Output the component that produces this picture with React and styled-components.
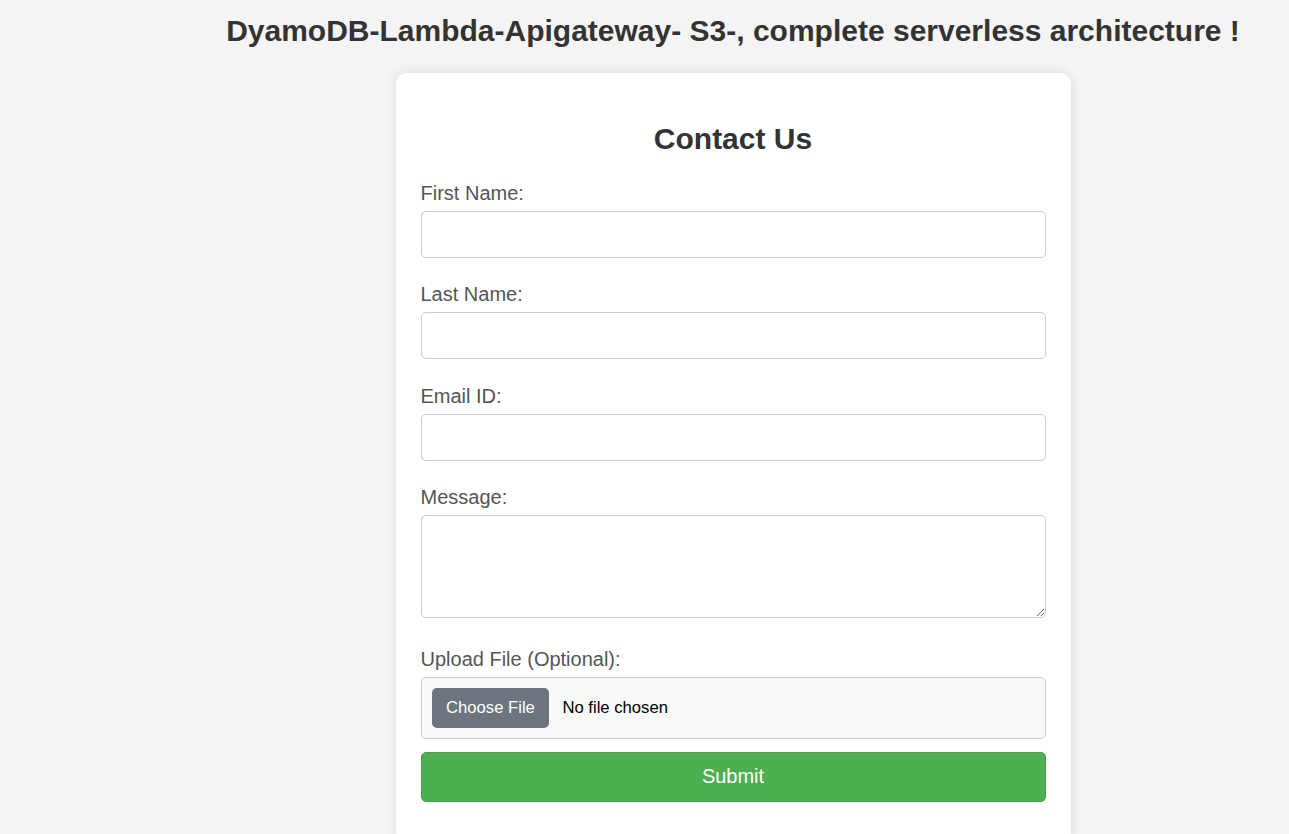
import styled, { createGlobalStyle } from 'styled-components'

const GlobalStyle = createGlobalStyle`
  html, body {
    margin: 0;
    padding: 0;
    background: #f4f4f4;
    font-family: "Liberation Sans", Arial, sans-serif;
  }
`

const Page = styled.main`
  display: flex;
  flex-direction: column;
  align-items: center;
  padding: 14px 0 0 177px;
`

const Heading = styled.h1`
  margin: 0 0 25px;
  font-size: 30px;
  font-weight: bold;
  color: #333;
  white-space: nowrap;
`

const Card = styled.div`
  box-sizing: border-box;
  width: 675px;
  background: #fff;
  padding: 25px 25px 40px;
  border-radius: 10px;
  box-shadow: 0 0 12px rgba(0, 0, 0, 0.1);
`

const Title = styled.h2`
  margin: 24px 0 26px;
  text-align: center;
  font-size: 30px;
  color: #333;
`

const Label = styled.label`
  display: block;
  margin-bottom: 6px;
  font-size: 20px;
  color: #555;
`

const Input = styled.input`
  display: block;
  box-sizing: border-box;
  width: 100%;
  height: 47px;
  margin: 0 0 25.25px;
  padding: 12px;
  border: 1px solid #ccc;
  border-radius: 5px;
  font-size: 20px;
  font-family: inherit;
  background: #fff;
`

const TextArea = styled.textarea`
  display: block;
  box-sizing: border-box;
  width: 100%;
  height: 103px;
  margin: 0 0 30px;
  padding: 12px;
  border: 1px solid #ccc;
  border-radius: 5px;
  font-size: 20px;
  font-family: inherit;
  resize: vertical;
`

const FileInput = styled.input`
  display: block;
  box-sizing: border-box;
  width: 100%;
  height: 62px;
  margin: 0 0 13px;
  padding: 10px;
  border: 1px solid #ccc;
  border-radius: 5px;
  background: #f9f9f9;
  font-size: 16.67px;
  font-family: inherit;
  color: #000;

  &::file-selector-button {
    height: 40px;
    margin-right: 13px;
    padding: 0 14.5px;
    border: none;
    border-radius: 5px;
    background: #6c757d;
    color: #fff;
    font-size: 16.67px;
    font-family: inherit;
  }
`

const SubmitButton = styled.button`
  display: block;
  box-sizing: border-box;
  width: 100%;
  height: 50px;
  border: 1px solid #46a049;
  border-radius: 5px;
  background: #4caf50;
  color: #fff;
  font-size: 20px;
  font-family: inherit;
  cursor: pointer;
`

const fields = [
  { id: 'firstName', label: 'First Name:', type: 'text' },
  { id: 'lastName', label: 'Last Name:', type: 'text' },
  { id: 'email', label: 'Email ID:', type: 'email' },
]

export default function App() {
  return (
    <>
      <GlobalStyle />
      <Page>
        <Heading>DyamoDB-Lambda-Apigateway- S3-, complete serverless architecture !</Heading>
        <Card>
          <Title>Contact Us</Title>
          <form onSubmit={(e) => e.preventDefault()}>
            {fields.map((field) => (
              <div key={field.id}>
                <Label htmlFor={field.id}>{field.label}</Label>
                <Input id={field.id} type={field.type} />
              </div>
            ))}
            <Label htmlFor="message">Message:</Label>
            <TextArea id="message" />
            <Label htmlFor="file">Upload File (Optional):</Label>
            <FileInput id="file" type="file" />
            <SubmitButton type="submit">Submit</SubmitButton>
          </form>
        </Card>
      </Page>
    </>
  )
}
